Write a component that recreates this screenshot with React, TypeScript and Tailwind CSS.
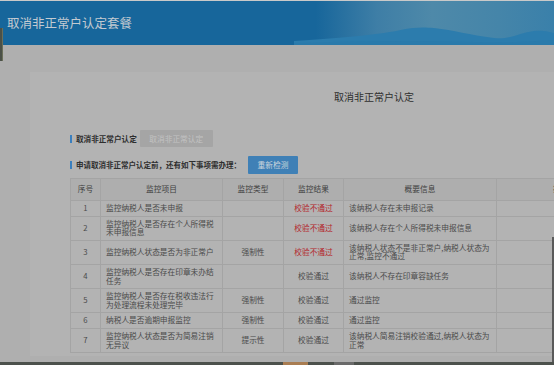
import React from 'react';

type Row = {
  no: string;
  item: string;
  type: string;
  pass: boolean;
  info: string;
};

const ROWS: Row[] = [
  { no: '1', item: '监控纳税人是否未申报', type: '', pass: false, info: '该纳税人存在未申报记录' },
  { no: '2', item: '监控纳税人是否存在个人所得税未申报信息', type: '', pass: false, info: '该纳税人存在个人所得税未申报信息' },
  { no: '3', item: '监控纳税人状态是否为非正常户', type: '强制性', pass: false, info: '该纳税人状态不是非正常户,纳税人状态为正常,监控不通过' },
  { no: '4', item: '监控纳税人是否存在印章未办结任务', type: '', pass: true, info: '该纳税人不存在印章容缺任务' },
  { no: '5', item: '监控纳税人是否存在税收违法行为处理流程未处理完毕', type: '强制性', pass: true, info: '通过监控' },
  { no: '6', item: '纳税人是否逾期申报监控', type: '强制性', pass: true, info: '通过监控' },
  { no: '7', item: '监控纳税人状态是否为简易注销无异议', type: '提示性', pass: true, info: '该纳税人简易注销校验通过,纳税人状态为正常' },
];

const cell = 'border border-[#a4a4a4] px-[5px] py-[3px] align-middle';

export default function App() {
  return (
    <div
      className="relative w-[554px] h-[365px] overflow-hidden bg-[#afafaf]"
      style={{ fontFamily: '"Noto Sans CJK SC", "Noto Sans", sans-serif' }}
    >
      {/* header band */}
      <div className="border-t border-[#c9c9c9]">
        <div className="relative h-[44px] flex items-center px-[7px] bg-[linear-gradient(90deg,#17669b_0%,#17669b_57%,#3e7ea6_68%,#4e89a9_78%,#4585a9_90%,#3a80aa_100%)]">
          <svg className="absolute right-0 bottom-0" width="260" height="20" viewBox="0 0 260 20">
            <path
              d="M0 20 L0 16 C30 14 60 12 90 8 C110 5 118 1 140 3 C160 5 175 10 200 13 C215 15 225 8 240 6 C250 5 255 7 260 8 L260 20 Z"
              fill="#2c7cad"
            />
            <path d="M0 20 L0 18 C60 16 120 15 180 17 C220 18 240 16 260 15 L260 20 Z" fill="#2a7aab" />
          </svg>
          <span className="relative text-[12.5px] leading-none text-[#c3cad1]">取消非正常户认定套餐</span>
        </div>
      </div>

      {/* left edge tab */}
      <div className="absolute left-0 top-[28px] w-[3px] h-[33px] bg-[#4b5148] border-r border-[#6b6f5a]" />

      {/* body */}
      <div className="pt-[27px] pl-[30px]">
        <div className="w-[688px] h-[284px] bg-[#b3b3b3] pt-[18px] px-[40px]">
          <div className="text-center text-[10px] leading-[14px] text-[#2f2f2f]">取消非正常户认定</div>

          <div className="mt-[26px] h-[17px] flex items-center">
            <span className="w-[2px] h-[8px] bg-[#3a7fbe]" />
            <span className="ml-[4px] text-[7.6px] font-bold text-[#2e2e2e]">取消非正常户认定</span>
            <span className="ml-[3px] h-[17px] w-[73px] flex items-center justify-center bg-[#a5a5a5] rounded-[1px] text-[7.7px] text-[#c2c2c2]">
              取消非正常认定
            </span>
          </div>

          <div className="mt-[9px] h-[18px] flex items-center">
            <span className="w-[2px] h-[8px] bg-[#3a7fbe]" />
            <span className="ml-[4px] text-[7.5px] font-bold text-[#2e2e2e]">申请取消非正常户认定前，还有如下事项需办理：</span>
            <span className="ml-[7px] h-[18px] w-[50px] flex items-center justify-center bg-[#3f80b6] rounded-[1px] text-[7.7px] text-[#c9d3dc]">
              重新检测
            </span>
          </div>

          <table className="mt-[4px] w-[608px] table-fixed border-collapse text-[7.7px] leading-[8.6px] text-[#4a4a4a]">
            <colgroup>
              <col className="w-[30px]" />
              <col className="w-[122px]" />
              <col className="w-[61px]" />
              <col className="w-[60px]" />
              <col className="w-[153px]" />
              <col />
            </colgroup>
            <thead>
              <tr className="h-[22px] bg-[#aeaeae] text-[#404040]">
                <th className={`${cell} font-normal text-center`}>序号</th>
                <th className={`${cell} font-normal text-center`}>监控项目</th>
                <th className={`${cell} font-normal text-center`}>监控类型</th>
                <th className={`${cell} font-normal text-center`}>监控结果</th>
                <th className={`${cell} font-normal text-center`}>概要信息</th>
                <th className={`${cell} font-normal text-left pl-[56px]`}>操作</th>
              </tr>
            </thead>
            <tbody>
              {ROWS.map((r) => (
                <tr key={r.no}>
                  <td className={`${cell} text-center`}>{r.no}</td>
                  <td className={cell}>{r.item}</td>
                  <td className={`${cell} text-center`}>{r.type}</td>
                  <td className={`${cell} text-center ${r.pass ? '' : 'text-[#b3262b]'}`}>
                    {r.pass ? '校验通过' : '校验不通过'}
                  </td>
                  <td className={cell}>{r.info}</td>
                  <td className={cell}></td>
                </tr>
              ))}
            </tbody>
          </table>
        </div>
      </div>

      {/* right edge shadow */}
      <div className="absolute right-0 top-[237px] w-[2px] h-[125px] bg-[#5a5a5a]" />

      {/* bottom strip */}
      <div className="absolute left-0 bottom-0 w-full h-[3px] bg-[#4c514c] flex">
        <div className="ml-[283px] w-[25px] h-full bg-[#a97d52]" />
        <div className="ml-[26px] w-[20px] h-full bg-[#6a6a6a]" />
      </div>
    </div>
  );
}
